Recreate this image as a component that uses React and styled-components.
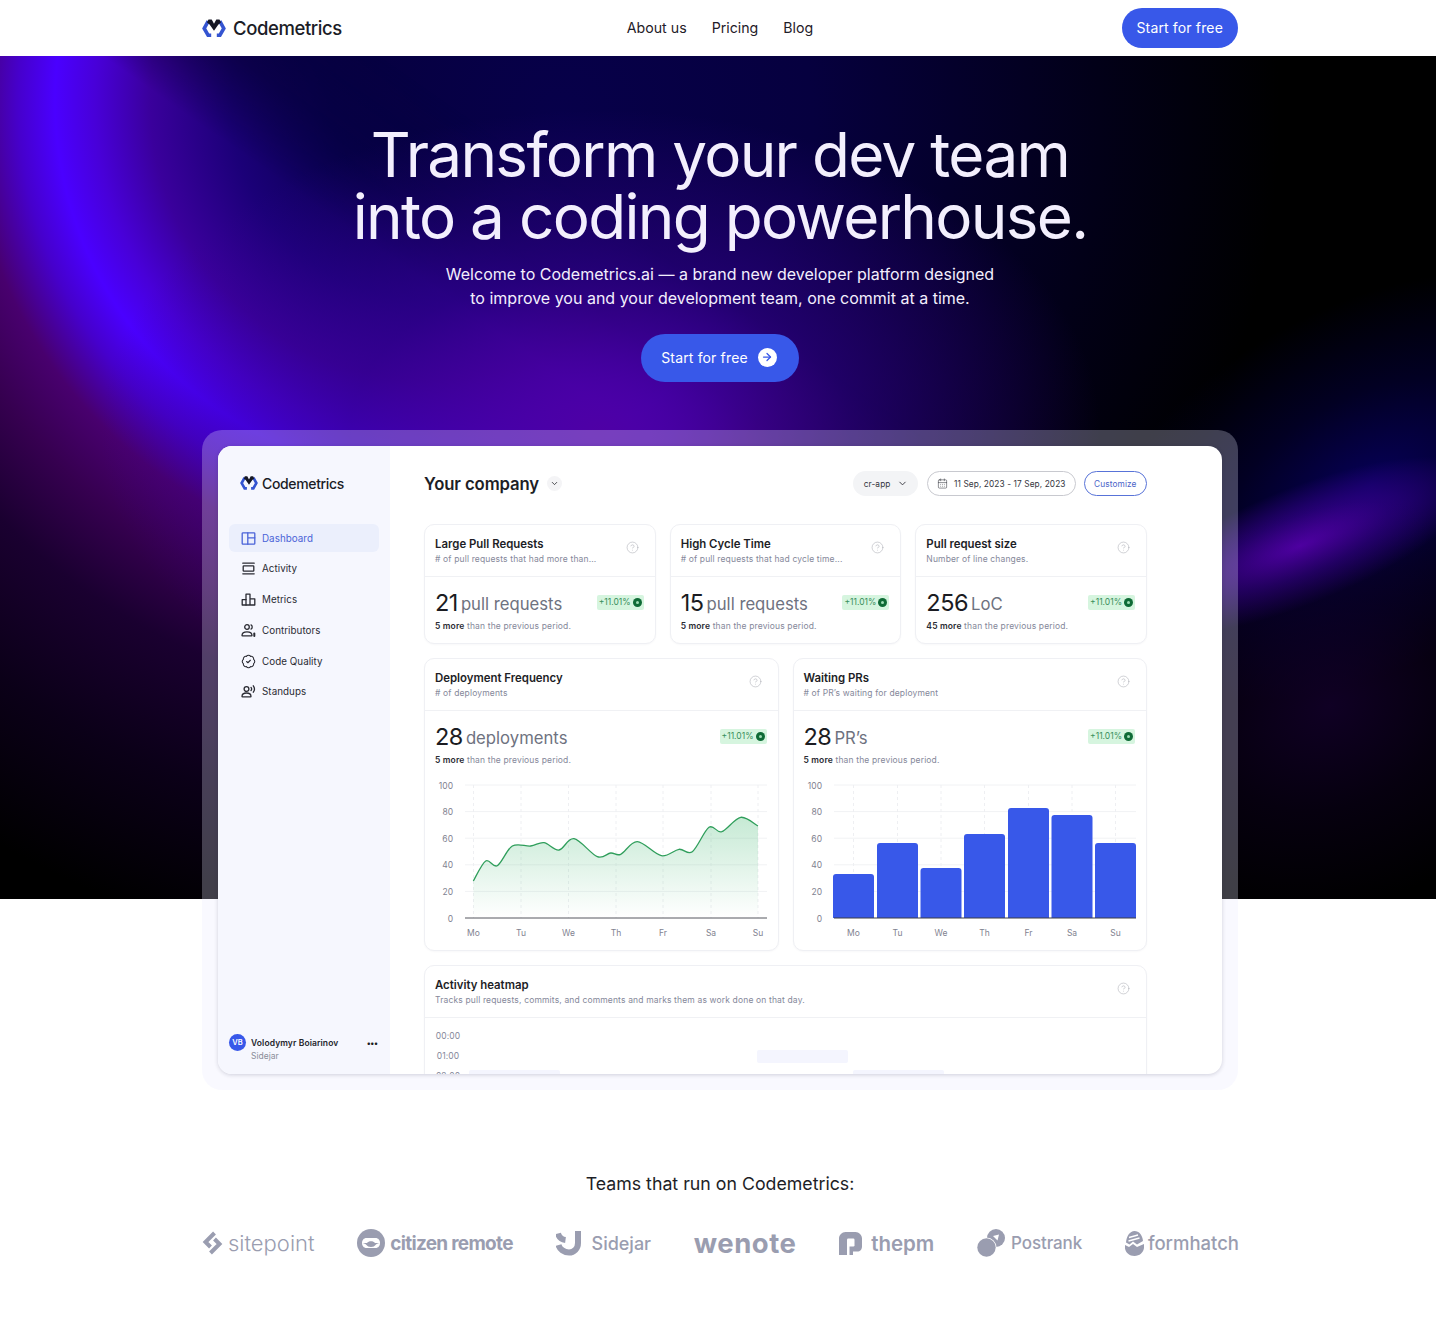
import React from "react";
import styled, { createGlobalStyle } from "styled-components";
import { ArrowRight, CalendarDays, ChevronDown, CircleHelp, BadgeCheck } from "lucide-react";

const GlobalStyle = createGlobalStyle`
  html, body { margin: 0; padding: 0; background: #fff; }
  body { font-family: Inter, "Liberation Sans", sans-serif; color: #1b1c22; -webkit-font-smoothing: antialiased; }
  * { box-sizing: border-box; }
  #root { width: 1436px; height: 1320px; overflow: hidden; }
`;

const BLUE = "#3858e9";

const Container = styled.div`
  width: 1036px;
  margin-left: 202px;
`;

const TopBar = styled(Container)`
  height: 56px;
  display: grid;
  grid-template-columns: 1fr auto 1fr;
  align-items: center;
`;

const Brand = styled.div`
  display: flex;
  align-items: center;
  gap: ${(p) => (p.$small ? "4px" : "7px")};
  font-size: ${(p) => (p.$small ? "14px" : "18.5px")};
  font-weight: 500;
  letter-spacing: ${(p) => (p.$small ? "-0.35px" : "-0.4px")};
  color: #1b1c26;
`;

const NavLinks = styled.nav`
  display: flex;
  gap: 25px;
  margin-top: -2px;
  font-size: 14.2px;
  color: #1f2028;
`;

const PillButton = styled.div`
  justify-self: end;
  display: flex;
  align-items: center;
  background: ${BLUE};
  color: #fff;
  height: ${(p) => (p.$large ? "48px" : "40px")};
  padding: 0 ${(p) => (p.$large ? "22px 2px 20px" : "15px 2px 14px")};
  border-radius: 24px;
  font-size: 14px;
  letter-spacing: 0.15px;
  gap: 10px;
`;

const Hero = styled.section`
  position: relative;
  height: 843px;
  padding-top: 68px;
  color: #f3effd;
`;

const HeroArt = styled.div`
  position: absolute;
  inset: 0;
  overflow: hidden;
  background: radial-gradient(circle 720px at 560px 60px, #07004a 0, #06003f 35%, #020018 75%, #000 100%);
  &::before {
    content: "";
    position: absolute;
    inset: 0;
    background: radial-gradient(
      circle at 430px 44px,
      #06003f 0,
      #08004f 100px,
      #1b0078 200px,
      #3a009c 280px,
      #4800d8 335px,
      #4a00ff 375px,
      #4600cc 412px,
      #48006e 462px,
      #360050 520px,
      #1a0030 600px,
      #0b0018 720px,
      #000 860px
    );
    mask-image: linear-gradient(35deg, #000 49.5%, rgba(0, 0, 0, 0.35) 54.5%, transparent 60%);
  }
`;

const Glow = styled.div`
  position: absolute;
  left: ${(p) => p.$x}px;
  top: ${(p) => p.$y}px;
  width: ${(p) => p.$w}px;
  height: ${(p) => p.$h}px;
  transform: rotate(${(p) => p.$r}deg);
  background: radial-gradient(closest-side, ${(p) => p.$inner}, ${(p) => p.$mid} 50%, transparent 100%);
`;

const HeroContent = styled(Container)`
  position: relative;
  display: flex;
  flex-direction: column;
  align-items: center;
`;

const Title = styled.h1`
  margin: 0;
  font-size: 62px;
  line-height: 62px;
  font-weight: 400;
  letter-spacing: -1.7px;
  text-align: center;
`;

const Lead = styled.p`
  margin: 14px 0 24px;
  font-size: 16px;
  line-height: 24px;
  text-align: center;
`;

const ArrowDot = styled.span`
  width: 19px;
  height: 19px;
  border-radius: 50%;
  background: #fff;
  color: ${BLUE};
  display: flex;
  align-items: center;
  justify-content: center;
`;

const Frame = styled.div`
  width: 1036px;
  height: 660px;
  margin-top: 48px;
  padding: 16px;
  border-radius: 20px;
  background: rgba(232, 232, 255, 0.27);
  color: #1b1c22;
`;

const AppWindow = styled.div`
  height: 628px;
  background: #fff;
  border-radius: 14px;
  overflow: hidden;
  display: grid;
  grid-template-columns: 172px minmax(0, 1fr);
  grid-template-rows: 628px;
  box-shadow: 0 1px 4px rgba(30, 30, 60, 0.18);
`;

const Sidebar = styled.aside`
  background: #f6f7fe;
  padding: 27px 11px 13px;
  display: flex;
  flex-direction: column;
`;

const SideBrand = styled.div`
  margin: 0 0 31px 11px;
  height: 20px;
  display: flex;
  align-items: center;
`;

const SideList = styled.div`
  display: flex;
  flex-direction: column;
  gap: 2.8px;
`;

const SideItem = styled.div`
  height: 28px;
  display: flex;
  align-items: center;
  gap: 6px;
  padding-left: 12px;
  border-radius: 6px;
  font-size: 9.8px;
  letter-spacing: 0.05px;
  color: ${(p) => (p.$active ? "#4a63d8" : "#2a2b33")};
  background: ${(p) => (p.$active ? "#ebeffc" : "transparent")};
`;

const SideFoot = styled.div`
  margin-top: auto;
  display: grid;
  grid-template-columns: 17px 1fr auto;
  column-gap: 5px;
  align-items: center;
  font-size: 8.5px;
`;

const Avatar = styled.div`
  width: 17px;
  height: 17px;
  border-radius: 50%;
  background: ${BLUE};
  color: #fff;
  font-size: 7.5px;
  font-weight: 600;
  display: flex;
  align-items: center;
  justify-content: center;
`;

const UserName = styled.div`
  font-weight: 600;
  letter-spacing: 0.1px;
  color: #24252c;
`;

const Dots = styled.div`
  font-weight: 800;
  font-size: 8px;
  line-height: 8px;
  letter-spacing: 0.2px;
  padding-right: 1px;
`;

const UserOrg = styled.div`
  grid-column: 2;
  line-height: 10px;
  color: #8a8d99;
`;

const Main = styled.main`
  padding: 25px 75px 0 34px;
  display: flex;
  flex-direction: column;
  gap: 14px;
  overflow: hidden;
`;

const MainHead = styled.div`
  flex: none;
  height: 25px;
  margin-bottom: 14px;
  display: flex;
  align-items: center;
`;

const CompanyName = styled.div`
  font-size: 16.7px;
  font-weight: 600;
  letter-spacing: -0.1px;
  color: #1d1e26;
`;

const ChevronDot = styled.span`
  width: 15px;
  height: 15px;
  margin-left: 8px;
  border-radius: 50%;
  background: #f4f4f6;
  display: flex;
  align-items: center;
  justify-content: center;
`;

const Chip = styled.div`
  height: 25px;
  display: flex;
  align-items: center;
  gap: 6px;
  padding: 0 ${(p) => p.$pad || "10px"};
  margin-left: ${(p) => p.$ml || "8px"};
  border-radius: 13px;
  font-size: 8.3px;
  letter-spacing: 0.1px;
  color: ${(p) => (p.$accent ? "#4a63c8" : "#34353d")};
  background: ${(p) => (p.$filled ? "#f3f4f6" : "transparent")};
  border: 1px solid ${(p) => (p.$accent ? "#5873d8" : p.$filled ? "transparent" : "#c8c9cf")};
`;

const Row = styled.div`
  flex: none;
  display: grid;
  grid-template-columns: repeat(${(p) => p.$cols}, minmax(0, 1fr));
  gap: 14px;
`;

const Card = styled.div`
  flex: none;
  border: 1px solid #eff0f4;
  border-radius: 10px;
  background: #fff;
  box-shadow: 0 1px 2px rgba(30, 30, 60, 0.03);
`;

const CardHead = styled.div`
  height: 52px;
  padding: 0 16px 0 10px;
  border-bottom: 1px solid #f0f1f4;
  display: flex;
  align-items: center;
  justify-content: space-between;
  & > svg {
    margin-top: -6px;
  }
`;

const CardTitle = styled.div`
  font-size: 11.4px;
  font-weight: 600;
  line-height: 14px;
  color: #1d1e26;
`;

const CardSub = styled.div`
  font-size: 8.5px;
  line-height: 12px;
  margin-top: 2px;
  letter-spacing: 0.15px;
  color: #85889a;
`;

const CardBody = styled.div`
  padding: 13px 11px ${(p) => (p.$flush ? "0" : "12px")} 10px;
`;

const StatLine = styled.div`
  height: 24px;
  display: flex;
  align-items: center;
`;

const StatValue = styled.span`
  font-size: 23.5px;
  letter-spacing: -0.5px;
  margin-right: 3px;
  color: #1b1c22;
`;

const StatUnit = styled.span`
  font-size: 16.7px;
  padding-top: 4px;
  color: #6e7280;
`;

const Delta = styled.span`
  margin-left: auto;
  height: 15px;
  padding: 0 2px;
  display: flex;
  align-items: center;
  gap: 2px;
  border-radius: 2px;
  background: #d6f5df;
  color: #3a8f5c;
  font-size: 8.5px;
`;

const DeltaDot = styled.span`
  width: 9px;
  height: 9px;
  border-radius: 50%;
  background: #0f6b36;
  display: flex;
  align-items: center;
  justify-content: center;
  &::after {
    content: "";
    width: 3px;
    height: 3px;
    border-radius: 50%;
    background: #9fdcb5;
  }
`;

const Note = styled.div`
  margin-top: 7px;
  height: 10px;
  line-height: 10px;
  font-size: 8.5px;
  letter-spacing: 0.15px;
  color: #85889a;
  b {
    font-weight: 600;
    color: #2a2b33;
  }
`;

const ChartSvg = styled.svg`
  display: block;
  width: 352px;
  height: 175px;
  margin-top: 10px;
`;

const HeatGrid = styled.div`
  padding: 8px 0 0 10px;
`;

const HeatRow = styled.div`
  height: 20px;
  display: grid;
  grid-template-columns: 28.5px repeat(7, 90.5px);
  column-gap: 5.5px;
  align-items: center;
  font-size: 8.5px;
  letter-spacing: 0.1px;
  color: #85889a;
`;

const HeatLabel = styled.span`
  width: 26px;
  text-align: center;
`;

const HeatCell = styled.div`
  height: 13px;
  border-radius: 2px;
  background: ${(p) => (p.$on ? "#f4f5fe" : "transparent")};
`;

const Teams = styled(Container)`
  padding-top: 273px;
`;

const TeamsTitle = styled.div`
  font-size: 17.75px;
  line-height: 24px;
  text-align: center;
  color: #1d1e26;
`;

const LogoRow = styled.div`
  margin: 31px -1px 0 0;
  height: 32px;
  display: flex;
  justify-content: space-between;
  align-items: center;
  color: #9a9db0;
`;

const LogoItem = styled.div`
  display: flex;
  align-items: center;
  gap: ${(p) => p.$gap}px;
  font-size: ${(p) => p.$size}px;
  font-weight: ${(p) => p.$weight};
  letter-spacing: ${(p) => p.$track || 0}px;
`;

const Mark = ({ size = 24 }) => (
  <svg width={size} height={size * 0.78} viewBox="0 0 24 18.7" fill="none">
    <path d="M6.2 2.2 2.2 9.4l4 7h3" stroke="#3454d1" strokeWidth="3.6" strokeLinejoin="miter" />
    <path d="M17.8 2.2l4 7.2-4 7h-3" stroke="#3454d1" strokeWidth="3.6" strokeLinejoin="miter" />
    <path d="M6.5 0.4h3.2L12 4.800l2.300-4.400h3.200l1.500 3-2.600 2-4.400 6.400-4.400-6.400-2.600-2z" fill="#161724" />
  </svg>
);

const Ico = ({ color = "#2a2b33", children }) => (
  <svg width="15" height="15" viewBox="0 0 15 15" fill="none" stroke={color} strokeWidth="1.3" strokeLinejoin="round" strokeLinecap="round">
    {children}
  </svg>
);

const navItems = [
  {
    label: "Dashboard",
    active: true,
    icon: (
      <Ico color="#4a63d8">
        <rect x="1.2" y="1.8" width="12.6" height="11.4" rx="0.8" />
        <path d="M6.8 1.8v11.4M6.8 6.8h7" />
      </Ico>
    ),
  },
  {
    label: "Activity",
    icon: (
      <Ico>
        <path d="M1.8 2.2h11.4M1.8 12.8h11.4" />
        <rect x="2.2" y="4.8" width="10.6" height="5.4" rx="0.6" />
      </Ico>
    ),
  },
  {
    label: "Metrics",
    icon: (
      <Ico>
        <path d="M1.2 13V7.6h3.8V2.2h4V13zM9 6.800h4.800V13H9" />
        <path d="M5 7.600V13" />
      </Ico>
    ),
  },
  {
    label: "Contributors",
    icon: (
      <Ico>
        <circle cx="6" cy="4" r="2.3" />
        <path d="M1 12.5c0-2.6 2-3.6 5-3.6s5 1 5 3.6c0 .3-.2.4-.5.4h-9c-.3 0-.5-.1-.5-.4z" />
        <path d="M10 1.900c1.600.6 1.600 3.600 0 4.200" />
        <path d="M13.300 10.500V13" strokeWidth="2" />
      </Ico>
    ),
  },
  { label: "Code Quality", icon: <BadgeCheck size={15} strokeWidth={1.7} color="#2a2b33" /> },
  {
    label: "Standups",
    icon: (
      <Ico>
        <circle cx="5.5" cy="5" r="2.4" />
        <path d="M1 12.4c0-2.5 1.900-3.400 4.500-3.400s4.500.9 4.500 3.400c0 .3-.2.4-.5.4h-8c-.3 0-.5-.1-.5-.4z" />
        <path d="M10 3.400c.8 1 .8 2.200 0 3.200M12.300 1.800c1.500 2 1.500 4.400 0 6.400" />
      </Ico>
    ),
  },
];

const TOP = 10;
const BOTTOM = 143;
const LEFT = 40;
const LABEL_Y = 161;
const yFor = (v) => BOTTOM - ((BOTTOM - TOP) * v) / 100;

const smooth = (pts) => {
  let d = `M${pts[0][0]} ${pts[0][1]}`;
  for (let i = 0; i < pts.length - 1; i++) {
    const p0 = pts[i - 1] || pts[i];
    const p1 = pts[i];
    const p2 = pts[i + 1];
    const p3 = pts[i + 2] || p2;
    const c1 = [p1[0] + (p2[0] - p0[0]) / 6, p1[1] + (p2[1] - p0[1]) / 6];
    const c2 = [p2[0] - (p3[0] - p1[0]) / 6, p2[1] - (p3[1] - p1[1]) / 6];
    d += `C${c1[0].toFixed(1)} ${c1[1].toFixed(1)} ${c2[0].toFixed(1)} ${c2[1].toFixed(1)} ${p2[0].toFixed(1)} ${p2[1].toFixed(1)}`;
  }
  return d;
};

const days = ["Mo", "Tu", "We", "Th", "Fr", "Sa", "Su"];

const Axes = ({ ticks, right }) => (
  <>
    {[100, 80, 60, 40, 20].map((v) => (
      <line key={v} x1={LEFT} x2={right} y1={yFor(v)} y2={yFor(v)} stroke="#f1f2f4" />
    ))}
    {ticks.map((x) => (
      <line key={x} x1={x} x2={x} y1={TOP} y2={BOTTOM} stroke="#eeeff2" strokeDasharray="3 3" />
    ))}
    {[100, 80, 60, 40, 20, 0].map((v) => (
      <text key={v} x="28" y={yFor(v) + 3.5} textAnchor="end" fontSize="8.5" fill="#7f8290">
        {v}
      </text>
    ))}
    {days.map((d, i) => (
      <text key={d} x={ticks[i]} y={LABEL_Y} textAnchor="middle" fontSize="8.5" fill="#7f8290">
        {d}
      </text>
    ))}
  </>
);

// traced from the reference, in px from the chart corner
const linePoints = [
  [148, 333], [185, 273], [220, 287], [265, 228], [320, 228], [360, 218], [405, 240], [450, 206], [520, 260],
  [560, 249], [590, 253], [640, 215], [712, 257], [765, 238], [805, 245], [855, 172], [893, 185], [950, 142], [1002, 168],
].map(([x, y]) => [x / 3 - 1, y / 3 - 5]);

const LineChart = () => {
  const line = smooth(linePoints);
  const ticks = [48.5, 96, 143.5, 191, 238, 286, 333];
  return (
    <ChartSvg viewBox="0 0 352 175" fontFamily="Inter, sans-serif">
      <defs>
        <linearGradient id="areaFill" x1="0" y1="0" x2="0" y2="1">
          <stop offset="0" stopColor="#34b267" stopOpacity="0.28" />
          <stop offset="1" stopColor="#34b267" stopOpacity="0" />
        </linearGradient>
      </defs>
      <Axes ticks={ticks} right={342} />
      <path d={`${line}L333 ${BOTTOM}L48.5 ${BOTTOM}Z`} fill="url(#areaFill)" />
      <path d={line} fill="none" stroke="#2f9e5b" strokeWidth="1.3" />
      <line x1={LEFT} x2="342" y1={BOTTOM} y2={BOTTOM} stroke="#55565e" />
    </ChartSvg>
  );
};

const BarChart = () => {
  const bars = [44, 75, 50, 84, 110, 103, 75];
  const lefts = [39, 83, 126.5, 170, 214, 257.5, 301];
  const ticks = lefts.map((x) => x + 20.5);
  return (
    <ChartSvg viewBox="0 0 352 175" fontFamily="Inter, sans-serif">
      <Axes ticks={ticks} right={342} />
      {bars.map((h, i) => (
        <path
          key={days[i]}
          d={`M${lefts[i]} ${BOTTOM}v${-h + 3}a3 3 0 0 1 3 -3h35a3 3 0 0 1 3 3v${h - 3}z`}
          fill={BLUE}
        />
      ))}
      <line x1={LEFT} x2="342" y1={BOTTOM} y2={BOTTOM} stroke="#3b3c46" />
    </ChartSvg>
  );
};

const Help = () => <CircleHelp size={13} strokeWidth={1} color="#a9abb3" />;

const StatCard = ({ title, sub, value, unit, more, chart }) => (
  <Card>
    <CardHead>
      <div>
        <CardTitle>{title}</CardTitle>
        <CardSub>{sub}</CardSub>
      </div>
      <Help />
    </CardHead>
    <CardBody $flush={!!chart}>
      <StatLine>
        <StatValue>{value}</StatValue>
        <StatUnit>{unit}</StatUnit>
        <Delta>
          +11.01%
          <DeltaDot />
        </Delta>
      </StatLine>
      <Note>
        <b>{more} more</b> than the previous period.
      </Note>
    </CardBody>
    {chart}
  </Card>
);

const SitepointMark = () => (
  <svg width="21" height="24" viewBox="0 0 21 24" fill="none" stroke="#9a9db0" strokeWidth="4">
    <path d="M12.500 2 3.500 11l5 5" />
    <path d="M8.500 22l9-9-5-5" />
  </svg>
);

const CitizenMark = () => (
  <svg width="28" height="28" viewBox="0 0 28 28">
    <circle cx="14" cy="14" r="14" fill="#9a9db0" />
    <path d="M9.500 9h9c2.800 0 4.500 2.200 4.500 5s-1.700 5-4.500 5h-9C6.700 19 5 16.800 5 14s1.700-5 4.500-5z" fill="#fff" />
    <path d="M5 14h5c1.500-2.200 6.500-2.200 8 0h5c-5 .2-4 4-9 4s-4-3.800-9-4z" fill="#9a9db0" />
  </svg>
);

const SidejarMark = () => (
  <svg width="26" height="26" viewBox="0 0 26 26" fill="none" stroke="#9a9db0">
    <path d="M22 1v12c0 5.500-4 9.500-9 9.500S3.500 19 2.500 15" strokeWidth="6" />
    <path d="M2 3.500c1 3.500 3.500 6 7.500 6.500" strokeWidth="6" />
  </svg>
);

const ThepmMark = () => (
  <svg width="23" height="24" viewBox="0 0 23 24">
    <path d="M6.500 1h10C20 1 23 4 23 7.500v8c0 3-2 5-4.500 5H14v3.500H0V7.500C0 4 3 1 6.500 1z" fill="#9a9db0" />
    <rect x="8" y="7.500" width="7.500" height="8" rx="1.200" fill="#fff" />
    <rect x="8" y="15" width="2.500" height="9" fill="#fff" />
  </svg>
);

const PostrankMark = () => (
  <svg width="28" height="28" viewBox="0 0 28 28">
    <circle cx="19" cy="9" r="9" fill="#9a9db0" />
    <circle cx="9.500" cy="18.500" r="10" fill="#fff" />
    <circle cx="9.500" cy="18.500" r="9.200" fill="#9a9db0" />
    <path d="M16 7l6-1.500-1.500 6z" fill="#fff" />
  </svg>
);

const FormhatchMark = () => (
  <svg width="19" height="26" viewBox="0 0 19 26">
    <path d="M0 15l4 2 4-3 4 3 7-3c1 7-3 12-9.500 12S-1 21 0 15z" fill="#9a9db0" />
    <path d="M1 12.500C1.500 6 5 1 9.500 1S17.500 5 18 11l-6 3.500-4-3-3.500 3z" fill="#9a9db0" />
    <path d="M4 7.500l9-2.500M3.500 11l11-3" stroke="#fff" strokeWidth="1.300" />
  </svg>
);

const logos = [
  { name: "sitepoint", mark: <SitepointMark />, gap: 5, size: 22, weight: 300 },
  { name: "citizen remote", mark: <CitizenMark />, gap: 5, size: 19, weight: 700, track: -0.7 },
  { name: "Sidejar", mark: <SidejarMark />, gap: 10, size: 18, weight: 500 },
  { name: "wenote", gap: 0, size: 27.5, weight: 700, track: 0.5 },
  { name: "thepm", mark: <ThepmMark />, gap: 9, size: 20.5, weight: 600 },
  { name: "Postrank", mark: <PostrankMark />, gap: 6, size: 17, weight: 500, track: -0.1 },
  { name: "formhatch", mark: <FormhatchMark />, gap: 4, size: 18.5, weight: 500 },
];

const heatRows = [
  { time: "00:00", on: [] },
  { time: "01:00", on: [3] },
  { time: "02:00", on: [0, 4] },
];

export default function App() {
  return (
    <>
      <GlobalStyle />
      <TopBar>
        <Brand>
          <Mark />
          Codemetrics
        </Brand>
        <NavLinks>
          <span>About us</span>
          <span>Pricing</span>
          <span>Blog</span>
        </NavLinks>
        <PillButton>Start for free</PillButton>
      </TopBar>
      <Hero>
        <HeroArt>
          <Glow $x={100} $y={54} $w={1000} $h={640} $r={0} $inner="rgba(78,0,165,1)" $mid="rgba(50,0,140,0.6)" />
          <Glow $x={1060} $y={250} $w={620} $h={360} $r={-28} $inner="rgba(8,0,110,0.8)" $mid="rgba(4,0,70,0.5)" />
          <Glow $x={1110} $y={432} $w={380} $h={116} $r={-22} $inner="rgba(85,0,175,1)" $mid="rgba(60,0,150,0.6)" />
          <Glow $x={1080} $y={450} $w={500} $h={400} $r={-25} $inner="rgba(26,0,60,0.6)" $mid="rgba(20,0,50,0.3)" />
        </HeroArt>
        <HeroContent>
          <Title>
            Transform your dev team
            <br />
            into a coding powerhouse.
          </Title>
          <Lead>
            Welcome to Codemetrics.ai — a brand new developer platform designed
            <br />
            to improve you and your development team, one commit at a time.
          </Lead>
          <PillButton $large>
            Start for free
            <ArrowDot>
              <ArrowRight size={12} strokeWidth={2.5} />
            </ArrowDot>
          </PillButton>
          <Frame>
            <AppWindow>
              <Sidebar>
                <SideBrand>
                  <Brand $small>
                    <Mark size={18} />
                    Codemetrics
                  </Brand>
                </SideBrand>
                <SideList>
                  {navItems.map((item) => (
                    <SideItem key={item.label} $active={item.active}>
                      {item.icon}
                      {item.label}
                    </SideItem>
                  ))}
                </SideList>
                <SideFoot>
                  <Avatar>VB</Avatar>
                  <UserName>Volodymyr Boiarinov</UserName>
                  <Dots>•••</Dots>
                  <UserOrg>Sidejar</UserOrg>
                </SideFoot>
              </Sidebar>
              <Main>
                <MainHead>
                  <CompanyName>Your company</CompanyName>
                  <ChevronDot>
                    <ChevronDown size={9} strokeWidth={2} />
                  </ChevronDot>
                  <Chip $filled $ml="auto" $pad="9.5px">
                    cr-app
                    <ChevronDown size={11} strokeWidth={2} />
                  </Chip>
                  <Chip $pad="9px" $ml="9px">
                    <CalendarDays size={11} strokeWidth={1.2} />
                    11 Sep, 2023 - 17 Sep, 2023
                  </Chip>
                  <Chip $accent $pad="9.5px">
                    Customize
                  </Chip>
                </MainHead>
                <Row $cols={3}>
                  <StatCard title="Large Pull Requests" sub="# of pull requests that had more than..." value="21" unit="pull requests" more={5} />
                  <StatCard title="High Cycle Time" sub="# of pull requests that had cycle time..." value="15" unit="pull requests" more={5} />
                  <StatCard title="Pull request size" sub="Number of line changes." value="256" unit="LoC" more={45} />
                </Row>
                <Row $cols={2}>
                  <StatCard title="Deployment Frequency" sub="# of deployments" value="28" unit="deployments" more={5} chart={<LineChart />} />
                  <StatCard title="Waiting PRs" sub="# of PR’s waiting for deployment" value="28" unit="PR’s" more={5} chart={<BarChart />} />
                </Row>
                <Card>
                  <CardHead>
                    <div>
                      <CardTitle>Activity heatmap</CardTitle>
                      <CardSub>Tracks pull requests, commits, and comments and marks them as work done on that day.</CardSub>
                    </div>
                    <Help />
                  </CardHead>
                  <HeatGrid>
                    {heatRows.map((row) => (
                      <HeatRow key={row.time}>
                        <HeatLabel>{row.time}</HeatLabel>
                        {days.map((d, i) => (
                          <HeatCell key={d} $on={row.on.includes(i)} />
                        ))}
                      </HeatRow>
                    ))}
                  </HeatGrid>
                </Card>
              </Main>
            </AppWindow>
          </Frame>
        </HeroContent>
      </Hero>
      <Teams>
        <TeamsTitle>Teams that run on Codemetrics:</TeamsTitle>
        <LogoRow>
          {logos.map((l) => (
            <LogoItem key={l.name} $gap={l.gap} $size={l.size} $weight={l.weight} $track={l.track}>
              {l.mark}
              {l.name}
            </LogoItem>
          ))}
        </LogoRow>
      </Teams>
    </>
  );
}
